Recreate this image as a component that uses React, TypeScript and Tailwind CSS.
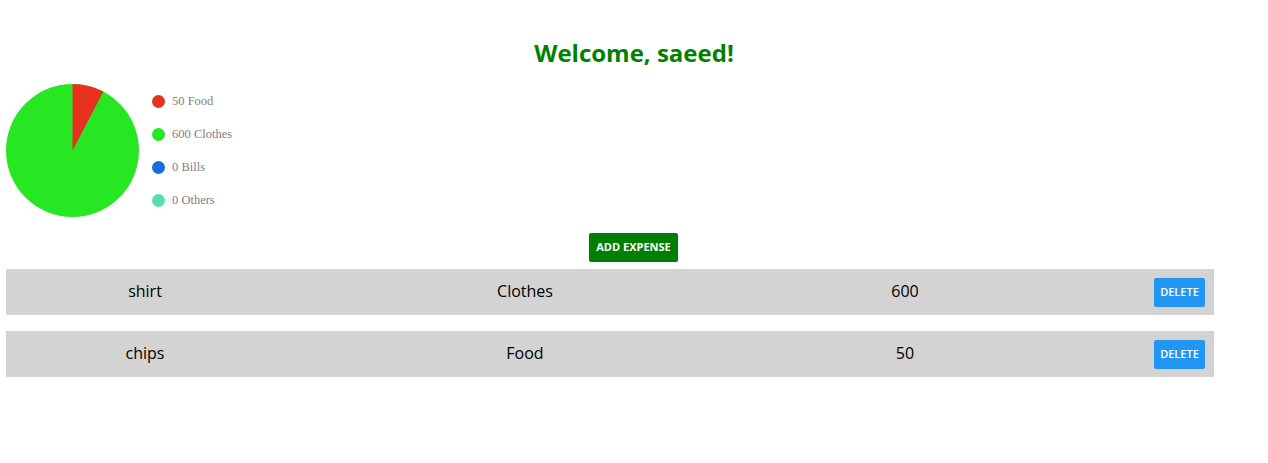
import React from "react";

const sans = { fontFamily: '"Open Sans", "Noto Sans", sans-serif' };

function Pie() {
  const total = 650;
  const ang = (50 / total) * 2 * Math.PI;
  const r = 66.5;
  const cx = 66.5;
  const cy = 66.5;
  const x = cx + r * Math.sin(ang);
  const y = cy - r * Math.cos(ang);
  return (
    <svg width="133" height="133" viewBox="0 0 133 133">
      <circle cx={cx} cy={cy} r={r} fill="#26e722" />
      <path d={`M${cx},${cy} L${cx},${cy - r} A${r},${r} 0 0 1 ${x},${y} Z`} fill="#e8301f" />
    </svg>
  );
}

const legend = [
  { c: "bg-[#e8301f]", t: "50 Food" },
  { c: "bg-[#26e722]", t: "600 Clothes" },
  { c: "bg-[#1d6be0]", t: "0 Bills" },
  { c: "bg-[#5bdbb0]", t: "0 Others" },
];

const rows = [
  { n: "shirt", c: "Clothes", a: "600" },
  { n: "chips", c: "Food", a: "50" },
];

export default function App() {
  return (
    <div className="w-[1268px] h-[463px] bg-white" style={sans}>
      <div className="pt-[36px] text-center">
        <h2 className="text-[24px] font-bold text-[#008000] leading-[34px]">Welcome, saeed!</h2>
      </div>
      <div className="flex items-start pl-[6px] mt-[14px]">
        <Pie />
        <div className="flex flex-col gap-[15px] ml-[13px] mt-[8px]">
          {legend.map((l) => (
            <div key={l.t} className="flex items-center h-[18px]">
              <span className={`w-[13px] h-[13px] rounded-full ${l.c}`} />
              <span
                className="ml-[7px] text-[12.5px] text-[#808080]"
                style={{ fontFamily: '"Liberation Serif", serif' }}
              >
                {l.t}
              </span>
            </div>
          ))}
        </div>
      </div>
      <div className="flex justify-center mt-[16px] pr-[1px]">
        <button className="w-[89px] h-[29px] rounded-[2px] bg-[#008000] text-white text-[11px] font-bold">
          ADD EXPENSE
        </button>
      </div>
      <div className="flex flex-col gap-[16px] mt-[7px] ml-[6px] w-[1208px]">
        {rows.map((r) => (
          <div key={r.n} className="flex items-center h-[46px] bg-[#d3d3d3] text-[16px] text-black">
            <div className="w-[278px] text-center pb-[2px]">{r.n}</div>
            <div className="w-[482px] text-center pb-[2px]">{r.c}</div>
            <div className="w-[278px] text-center pb-[2px]">{r.a}</div>
            <button className="ml-auto mr-[9px] w-[51px] h-[29px] rounded-[2px] bg-[#2196f3] text-white text-[11px] font-semibold">
              DELETE
            </button>
          </div>
        ))}
      </div>
    </div>
  );
}
